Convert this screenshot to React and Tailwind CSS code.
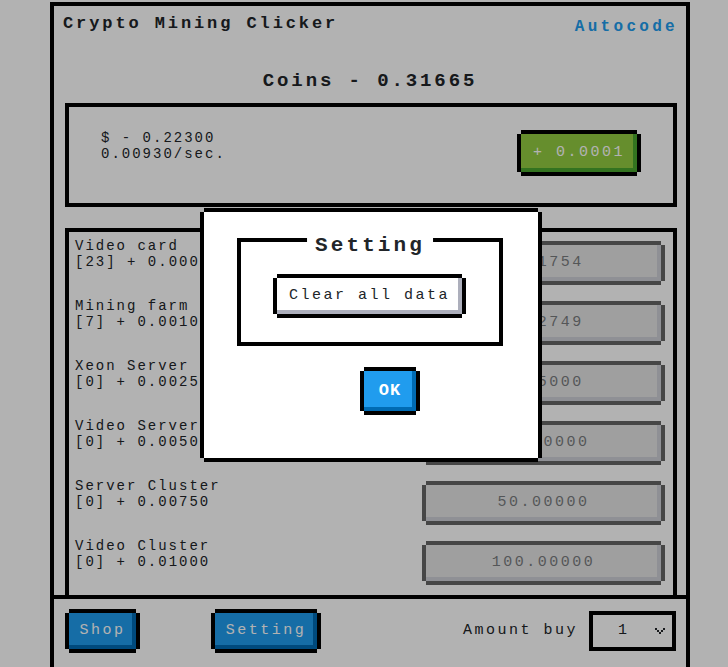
import { useState } from "react";

const mono = "font-['Liberation_Mono','DejaVu_Sans_Mono',monospace]";

// NES style pixel buttons: the 4 offset shadows draw the border with cut corners
const btnBlue =
  "bg-[#209cee] text-white shadow-[0_-4px_0_0_#000,0_4px_0_0_#000,4px_0_0_0_#000,-4px_0_0_0_#000,inset_-4px_-4px_0_0_#006bb3]";
const btnGreen =
  "bg-[#92cc41] text-white shadow-[0_-4px_0_0_#000,0_4px_0_0_#000,4px_0_0_0_#000,-4px_0_0_0_#000,inset_-4px_-4px_0_0_#4aa52e]";
const btnWhite =
  "bg-white text-[#212529] shadow-[0_-4px_0_0_#000,0_4px_0_0_#000,4px_0_0_0_#000,-4px_0_0_0_#000,inset_-4px_-4px_0_0_#adafbc]";
const btnGray =
  "bg-[#d3d3d3] text-[#212529] opacity-60 shadow-[0_-4px_0_0_#000,0_4px_0_0_#000,4px_0_0_0_#000,-4px_0_0_0_#000,inset_-4px_-4px_0_0_#adafbc]";

const miners = [
  { name: "Video card", count: 23, rate: "0.00010", price: "0.01754" },
  { name: "Mining farm", count: 7, rate: "0.00100", price: "0.02749" },
  { name: "Xeon Server", count: 0, rate: "0.00250", price: "1.25000" },
  { name: "Video Server", count: 0, rate: "0.00500", price: "25.00000" },
  { name: "Server Cluster", count: 0, rate: "0.00750", price: "50.00000" },
  { name: "Video Cluster", count: 0, rate: "0.01000", price: "100.00000" },
];

const Chevron = () => (
  <svg width="10" height="6" viewBox="0 0 10 6" shapeRendering="crispEdges">
    <rect x="0" y="0" width="2" height="2" fill="#212529" />
    <rect x="8" y="0" width="2" height="2" fill="#212529" />
    <rect x="2" y="2" width="2" height="2" fill="#212529" />
    <rect x="6" y="2" width="2" height="2" fill="#212529" />
    <rect x="4" y="4" width="2" height="2" fill="#212529" />
  </svg>
);

export default function App() {
  const [showSettings, setShowSettings] = useState(true);

  return (
    <div className={`relative h-screen overflow-hidden bg-white text-[#212529] ${mono}`}>
      <div className="ml-[50px] mt-[2px] flex h-[700px] w-[640px] flex-col border-4 border-black">
        <div className="flex h-[589px] shrink-0 flex-col overflow-hidden">
          <header className="flex items-start justify-between pl-[9px] pr-[8px] pt-[8px]">
            <h1 className="text-[17px] font-bold leading-[20px] tracking-[2.9px]">Crypto Mining Clicker</h1>
            <a className="mt-[3px] text-[16px] font-bold leading-[20px] tracking-[3.3px] text-[#209cee]">
              Autocode
            </a>
          </header>

          <p className="mt-[32px] text-center text-[19px] font-bold leading-[24px] tracking-[2.9px]">
            Coins - 0.31665
          </p>

          <section className="ml-[11px] mr-[9px] mt-[10px] flex h-[104px] shrink-0 items-start justify-between border-4 border-black px-[32px] pt-[23px]">
            <div className="text-[14px] leading-[16px] tracking-[2px]">
              <p>$ - 0.22300</p>
              <p>0.00930/sec.</p>
            </div>
            <button
              className={`m-[4px] flex h-[38px] w-[116px] items-center justify-center text-[15px] tracking-[2.5px] ${btnGreen}`}
            >
              + 0.0001
            </button>
          </section>

          <section className="ml-[11px] mr-[9px] mt-[21px] h-[420px] shrink-0 border-4 border-black pl-[6px] pr-[8px] pt-[9px]">
            <div className="flex flex-col gap-[16px]">
              {miners.map((m) => (
                <div key={m.name} className="flex h-[44px] items-start justify-between">
                  <div className="-mt-[3px] text-[14px] leading-[16px] tracking-[2px]">
                    <p>{m.name}</p>
                    <p>
                      [{m.count}] + {m.rate}
                    </p>
                  </div>
                  <button
                    className={`m-[4px] flex h-[36px] w-[235px] items-center justify-center text-[15px] tracking-[2.5px] ${btnGray}`}
                  >
                    {m.price}
                  </button>
                </div>
              ))}
            </div>
          </section>
        </div>

        <footer className="flex flex-1 items-start border-t-4 border-black pl-[11px] pr-[10px] pt-[10px]">
          <button
            className={`m-[4px] flex h-[36px] w-[67px] items-center justify-center text-[15px] tracking-[2.5px] ${btnBlue}`}
          >
            Shop
          </button>
          <button
            onClick={() => setShowSettings(true)}
            className={`my-[4px] ml-[75px] mr-[4px] flex h-[36px] w-[102px] items-center justify-center text-[15px] tracking-[2.5px] ${btnBlue}`}
          >
            Setting
          </button>
          <div className="ml-auto mt-[2px] flex items-center">
            <span className="mr-[11px] text-[15px] leading-[20px] tracking-[2.5px]">Amount buy</span>
            <div className="flex h-[40px] w-[87px] items-center border-4 border-black pl-[25px] pr-[7px] text-[15px]">
              <span>1</span>
              <span className="ml-auto flex">
                <Chevron />
              </span>
            </div>
          </div>
        </footer>
      </div>

      {showSettings && (
        <>
          <div className="absolute inset-0 bg-black/30" />
          <div className="absolute left-[204px] top-[212px] h-[246px] w-[334px] bg-white pl-[33px] pt-[26px] shadow-[0_-4px_0_0_#000,0_4px_0_0_#000,4px_0_0_0_#000,-4px_0_0_0_#000]">
            <div className="relative h-[108px] w-[266px] border-4 border-black pl-[32px] pt-[32px]">
              <span className="absolute -top-[8px] left-1/2 -translate-x-1/2 bg-white px-[8px] text-[21px] font-bold leading-[24px] tracking-[3.1px]">
                Setting
              </span>
              <button
                className={`m-[4px] flex h-[36px] w-[185px] items-center justify-center text-[15px] tracking-[2.5px] ${btnWhite}`}
              >
                Clear all data
              </button>
            </div>
            <button
              onClick={() => setShowSettings(false)}
              className={`ml-[127px] mt-[25px] flex h-[40px] w-[52px] items-center justify-center text-[17px] font-bold tracking-[1px] ${btnBlue}`}
            >
              OK
            </button>
          </div>
        </>
      )}
    </div>
  );
}
